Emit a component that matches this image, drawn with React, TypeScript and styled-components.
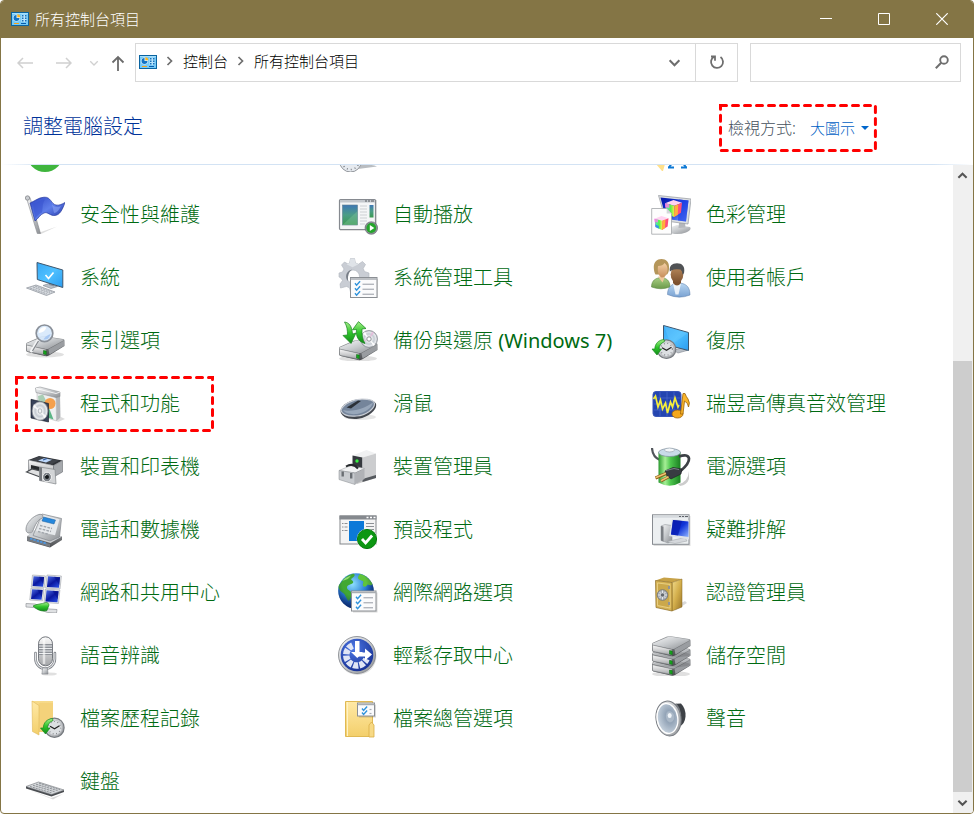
import React from "react";
import styled, { createGlobalStyle } from "styled-components";

const uiFont = `"Noto Sans", "Noto Sans CJK TC", sans-serif`;

const GlobalStyle = createGlobalStyle`
  *, *::before, *::after { box-sizing: border-box; }
  html, body, #root { height: 100%; margin: 0; }
  body { background: #fff; font-family: ${uiFont}; font-weight: 300; }
  button, input, select { font: inherit; }
`;

const Window = styled.div`
  display: flex;
  flex-direction: column;
  height: 100vh;
  overflow: hidden;
  background: #fff;
  border: 1px solid #847545;
  border-radius: 4px;
`;

/* ---------- title bar ---------- */

const TitleBar = styled.header`
  display: flex;
  align-items: center;
  flex: none;
  height: 37px;
  padding: 0 2px 2px 10px;
  background: #847545;
  color: #fff;
`;

const Title = styled.h1`
  flex: 1;
  margin: 0;
  padding-left: 6px;
  font-size: 15px;
  line-height: 20px;
  font-weight: 300;
`;

const CaptionButton = styled.button`
  display: grid;
  place-items: center;
  width: 58px;
  height: 100%;
  padding: 0;
  border: 0;
  background: transparent;
  color: #fff;
`;

/* ---------- navigation row ---------- */

const NavRow = styled.div`
  display: flex;
  align-items: center;
  flex: none;
  height: 48px;
  padding: 0 12px 0 9px;
`;

const NavButton = styled.button<{ $w: number; $active?: boolean }>`
  display: grid;
  place-items: center;
  width: ${(p) => p.$w}px;
  height: 38px;
  padding: 2px 0 0;
  border: 0;
  background: transparent;
  color: ${(p) => (p.$active ? "#6b6b6b" : "#d0d0d0")};
`;

const AddressBar = styled.nav`
  display: flex;
  align-items: center;
  flex: 1;
  min-width: 0;
  height: 39px;
  margin-right: 12px;
  padding-left: 3px;
  border: 1px solid #d9d9d9;
`;

const Crumbs = styled.ol`
  display: flex;
  align-items: center;
  flex: 1;
  min-width: 0;
  margin: 0;
  padding: 0 0 2px;
  list-style: none;
  font-size: 15px;
  line-height: 20px;
`;

const Crumb = styled.li`
  display: flex;
  align-items: center;
  white-space: nowrap;
`;

const CrumbArrow = styled.svg`
  margin: 0 10px 0 9px;
`;

const CrumbLink = styled.a`
  color: #000;
  text-decoration: none;
`;

const BarButton = styled.button<{ $divided?: boolean }>`
  display: grid;
  place-items: center;
  width: 42px;
  height: 37px;
  padding: 0;
  border: 0;
  border-left: ${(p) => (p.$divided ? "1px solid #d9d9d9" : "0")};
  background: transparent;
  color: #6e6e6e;
`;

const SearchBox = styled.form`
  display: flex;
  align-items: center;
  width: 211px;
  height: 39px;
  border: 1px solid #d9d9d9;
`;

const SearchInput = styled.input`
  flex: 1;
  min-width: 0;
  height: 100%;
  padding: 0 8px;
  border: 0;
  outline: 0;
  background: transparent;
  font-size: 15px;
`;

const SearchButton = styled.button`
  display: grid;
  place-items: center;
  width: 36px;
  height: 100%;
  padding: 0;
  border: 0;
  background: transparent;
  color: #6e6e6e;
`;

/* ---------- heading row ---------- */

const HeadingRow = styled.div`
  display: flex;
  align-items: center;
  justify-content: space-between;
  flex: none;
  height: 78px;
  padding: 3px 96px 0 22px;
`;

const Heading = styled.h2`
  margin: 0;
  color: #003399;
  font-size: 20px;
  line-height: 28px;
  font-weight: 300;
`;

const ViewBy = styled.div`
  position: relative;
  display: flex;
  align-items: center;
  height: 48px;
  margin-top: 2px;
  padding: 0 8px 0 9px;
`;

const ViewLabel = styled.label`
  margin-right: 14px;
  color: #454f5c;
  font-size: 16px;
  line-height: 24px;
`;

const ViewSelect = styled.select`
  appearance: none;
  padding: 0;
  border: 0;
  outline: 0;
  background: transparent;
  color: #0060c4;
  font-size: 15px;
  line-height: 24px;
`;

const Caret = styled.svg`
  margin-left: 5px;
`;

const Rule = styled.div`
  flex: none;
  height: 1px;
  background: linear-gradient(90deg, #fff 0, #d3e3f4 40px, #d3e3f4 calc(100% - 40px), #fff 100%);
`;

/* ---------- items ---------- */

const Body = styled.div`
  display: flex;
  flex: 1;
  min-height: 0;
`;

const Viewport = styled.main`
  display: flex;
  flex: 1;
  flex-direction: column;
  justify-content: flex-end;
  min-width: 0;
  overflow: hidden;
`;

const Items = styled.ul`
  display: grid;
  grid-template-columns: repeat(3, minmax(0, 1fr));
  grid-auto-rows: 63px;
  flex: none;
  margin: 0 -1px 0 0;
  padding: 0 0 0 14px;
  list-style: none;
`;

const Item = styled.li`
  display: flex;
  align-items: center;
`;

const ItemLink = styled.a`
  position: relative;
  display: flex;
  align-items: center;
  height: 56px;
  padding: 0 34px 0 10px;
  color: #006a12;
  font-size: 20px;
  line-height: 28px;
  white-space: nowrap;
  text-decoration: none;
`;

const ItemName = styled.span`
  margin-left: 15px;
`;

const Latin = styled.span`
  font-weight: 400;
`;

const Art = styled.svg`
  display: block;
  flex: none;
  width: 40px;
  height: 40px;
`;

const PeekArt = styled(Art)`
  margin-left: 10px;
`;

const Marker = styled.svg`
  position: absolute;
  inset: 0;
  width: 100%;
  height: 100%;
  pointer-events: none;

  rect {
    width: calc(100% - 3px);
    height: calc(100% - 3px);
  }
`;

const Defs = styled.svg`
  position: absolute;
  width: 0;
  height: 0;
`;

/* ---------- scroll bar ---------- */

const ScrollBar = styled.div`
  display: grid;
  grid-template-rows: 21px 175fr 430fr 21px;
  flex: none;
  width: 20px;
  padding-right: 1px;
  background: #f0f0f0;
`;

const ScrollButton = styled.button<{ $row: number }>`
  display: grid;
  grid-row: ${(p) => p.$row};
  place-items: center;
  padding: 0;
  border: 0;
  background: transparent;
  color: #555;
`;

const Thumb = styled.div`
  grid-row: 3;
  background: #cdcdcd;
`;

/* ---------- shared drawings ---------- */

function Dashes() {
  return (
    <Marker aria-hidden="true">
      <rect x="1.5" y="1.5" fill="none" stroke="#ff0000" strokeWidth="3" strokeLinecap="round" strokeDasharray="6 6" />
    </Marker>
  );
}

function Chevron({ dir, size = 12, width = 2 }: { dir: "up" | "down"; size?: number; width?: number }) {
  const d = { up: "M1.5 8.5 6 4l4.5 4.5", down: "M1.5 4 6 8.5 10.5 4" }[dir];
  return (
    <svg width={size} height={size} viewBox="0 0 12 12" aria-hidden="true">
      <path d={d} fill="none" stroke="currentColor" strokeWidth={width} />
    </svg>
  );
}

function PanelIcon() {
  return (
    <svg width="18" height="14" viewBox="0 0 18 14" aria-hidden="true">
      <rect x=".5" y=".5" width="17" height="13" fill="#74caf8" stroke="#0a64a0" />
      <rect x="1" y="1" width="16" height="1" fill="#a4defc" />
      <circle cx="5.5" cy="6" r="3.6" fill="#dff2fd" />
      <path d="M5.5 6V3a3 3 0 1 0 3 3z" fill="#1273c4" />
      <path d="M6.3 5.2V2.2a3 3 0 0 1 3 3z" fill="#ffb51b" />
      <path d="M10.500 2.500h5v7.500h-5z" fill="#b9e3fb" />
      <path d="M11 3h1.500v1.500H11zM14 3h1.500v1.500H14zM11 5.500h1.500V7H11zM14 5.500h1.500V7H14zM11 8h1.500v1.500H11zM14 8h1.500v1.500H14z" fill="#1671ba" />
      <path d="M3 11.500h5" stroke="#f5a21b" />
      <path d="M10 11.500h5" stroke="#0a5cab" />
    </svg>
  );
}

function Gradients() {
  const lin = (id: string, a: string, b: string, c?: string, diag = false) => (
    <linearGradient id={id} x1="0" y1="0" x2={diag ? "1" : "0"} y2="1">
      <stop offset="0" stopColor={a} />
      {c && <stop offset=".5" stopColor={b} />}
      <stop offset="1" stopColor={c || b} />
    </linearGradient>
  );
  return (
    <Defs aria-hidden="true">
      <defs>
        {lin("silver", "#fafafa", "#a3a5a8")}
        {lin("silverD", "#f6f7f8", "#c6c9cc", "#8b8e92", true)}
        {lin("dark", "#9a9da0", "#4b4d50")}
        {lin("sky", "#37a8f5", "#4fc0ff", "#2b9cf0", true)}
        {lin("navy", "#0718a8", "#1034d8", "#8fb4ff", true)}
        {lin("screen", "#4a68e0", "#0a18a0", "#2a50e4", true)}
        {lin("flag", "#2c45c4", "#5f7eea", "#1c2f9e", true)}
        {lin("folder", "#ffe9a6", "#f3cf6b")}
        {lin("folderD", "#f8dc8c", "#dba94a")}
        {lin("leaf", "#a6f08a", "#2fc42b", "#138a1a")}
        {lin("gold", "#f2dc8d", "#d3ae4b", "#98742a", true)}
        {lin("pic", "#3f78b5", "#4c9d86", "#3c9a50")}
        <linearGradient id="cell">
          <stop offset="0" stopColor="#2a9a2f" />
          <stop offset=".3" stopColor="#a6ef96" />
          <stop offset=".55" stopColor="#4cc64c" />
          <stop offset="1" stopColor="#1b7f22" />
        </linearGradient>
        <linearGradient id="rainbow">
          <stop offset="0" stopColor="#f25fe6" />
          <stop offset=".25" stopColor="#4ff0a0" />
          <stop offset=".6" stopColor="#5cf04a" />
          <stop offset="1" stopColor="#fff04a" />
        </linearGradient>
        <radialGradient id="globe" cx=".4" cy=".3" r=".75">
          <stop offset="0" stopColor="#8fe0ff" />
          <stop offset=".5" stopColor="#2b7fd6" />
          <stop offset="1" stopColor="#0a2a7c" />
        </radialGradient>
        <radialGradient id="shade" cx=".45" cy=".3" r=".75">
          <stop offset=".45" stopColor="#04184f" stopOpacity="0" />
          <stop offset="1" stopColor="#04184f" stopOpacity=".65" />
        </radialGradient>
        <radialGradient id="disc" cx=".5" cy=".5" r=".5">
          <stop offset=".2" stopColor="#fff" />
          <stop offset=".6" stopColor="#c6ccd3" />
          <stop offset=".85" stopColor="#e9ebee" />
          <stop offset="1" stopColor="#9fa4aa" />
        </radialGradient>
        <radialGradient id="blue" cx=".4" cy=".3" r=".8">
          <stop offset="0" stopColor="#4d78e6" />
          <stop offset="1" stopColor="#122a8c" />
        </radialGradient>
        <radialGradient id="cone" cx=".62" cy=".45" r=".7">
          <stop offset="0" stopColor="#eef2f6" />
          <stop offset=".3" stopColor="#93a4b7" />
          <stop offset="1" stopColor="#d2dce6" />
        </radialGradient>
        {lin("skin", "#f3cfa4", "#c78f5c")}
        {lin("skinB", "#b98a5c", "#7d5230")}
        {lin("shirtG", "#a9cf84", "#6b9a4a")}
        {lin("shirtB", "#b9d7f2", "#7aa2d2")}
      </defs>
    </Defs>
  );
}

function CheckSheet({ x, y, w, h, rows }: { x: number; y: number; w: number; h: number; rows: number }) {
  const step = (h - 5) / rows;
  return (
    <g>
      <rect x={x + 1.5} y={y + 1.5} width={w} height={h} fill="#000" opacity=".15" />
      <rect x={x} y={y} width={w} height={h} fill="#fbfbfc" stroke="#8b8f94" />
      <path d={`M${x} ${y + 1.5}h${w}`} stroke="#a9adb2" strokeWidth="1.5" />
      {Array.from({ length: rows }, (_, i) => {
        const cy = y + 5 + i * step + step / 4;
        return (
          <g key={i} fill="none">
            <path d={`M${x + 4.5} ${cy - 0.5}l1.6 2 3.5-4`} stroke="#2f93dc" strokeWidth="1.4" />
            <path d={`M${x + 12} ${cy + 0.5}h${w - 15}`} stroke="#a7abb3" strokeWidth="1.2" />
          </g>
        );
      })}
    </g>
  );
}

function Drive({ y }: { y: number }) {
  return (
    <g transform={`translate(0 ${y})`}>
      <ellipse cx="20" cy="18.5" rx="19" ry="3" fill="#000" opacity=".12" />
      <path d="M1 8 Q1 7 3 6.2L16 .6Q18 0 20 .2L38 3q1.5.4 1.500 1.500v5.500L24 19.500q-2 1-4 .5L2.500 16Q1 15.500 1 14z" fill="url(#dark)" />
      <path d="M1.500 7.500 17 1q1-.5 3-.2l18 2.700q1 .5 0 1L24 12.500q-1.500.8-3.500.4L2 9Q1 8.500 1.500 7.500z" fill="url(#silverD)" />
      <path d="M1.500 9 21 13.400v5.800L2.500 15.500q-1-.4-1-1.500z" fill="url(#silver)" stroke="#808387" strokeWidth=".6" />
      <path d="M23.500 13.300 39 4.700v5L24.500 18.500z" fill="#9a9da1" />
      <path d="M18.500 14.500l2.800.6v3.600l-2.800-.7z" fill="#15a51c" stroke="#0a5e10" strokeWidth=".5" />
    </g>
  );
}

function Clock({ x, y, r }: { x: number; y: number; r: number }) {
  return (
    <g transform={`translate(${x} ${y})`}>
      <circle r={r} fill="url(#silverD)" stroke="#777b80" strokeWidth="1.2" />
      <circle r={r - 2} fill="#dcdfe2" stroke="#b3b6ba" strokeWidth=".6" />
      <circle r={r - 3.4} fill="none" stroke="#7b7e82" strokeWidth="1.2" strokeDasharray=".8 2.7" />
      <path d="M-4.500-1.500 0 1l5-3" fill="none" stroke="#222" strokeWidth="1.2" />
    </g>
  );
}

function Backward({ x, y }: { x: number; y: number }) {
  return (
    <path
      transform={`translate(${x} ${y})`}
      d="M0 9.500 5 15.500 9.500 9.500H7C7 6 9 3.500 12.500 2L12 0C6.500.5 3 4 2.800 9.500z"
      fill="url(#leaf)"
      stroke="#168a1c"
      strokeWidth=".7"
    />
  );
}

function Cube({ x, y, s }: { x: number; y: number; s: number }) {
  return (
    <g transform={`translate(${x} ${y}) scale(${s / 16})`}>
      <path d="M0 3 8 0l8 2.500-7 3z" fill="#ffd3f0" />
      <path d="M0 3 9 5.500 8.500 16 1 12.500z" fill="url(#rainbow)" />
      <path d="M9 5.500 16 2.500 15 12 8.500 16z" fill="#ff4f7a" />
      <path d="M9 5.500l3.500-1.500-.5 9.800-3.500 2.200z" fill="#ffb03a" />
      <path d="M.8 9.500 5 11.500v3L1 12.500z" fill="#2f7dff" opacity=".8" />
      <path d="M0 3l4 1.100L4 7.500.3 6.500z" fill="#ff7fe6" opacity=".8" />
    </g>
  );
}

function MiniScreen({ x, y, w, h }: { x: number; y: number; w: number; h: number }) {
  return (
    <g transform={`translate(${x} ${y}) skewX(-6) skewY(4)`}>
      <rect width={w} height={h} fill="#e3e6ea" stroke="#a4a8ae" strokeWidth=".6" />
      <rect x="1.2" y="1.2" width={w - 2.4} height={h - 2.4} fill="url(#screen)" />
      <path d={`M${w - 1.2} 1.200v${h * 0.6}L${w * 0.5} 1.200z`} fill="#06128c" opacity=".6" />
    </g>
  );
}

const art: Record<string, React.ReactNode> = {
  flag: (
    <>
      <path d="M13 38 32 31.500 16 39z" fill="#000" opacity=".13" />
      <path d="M1.500 3 12.300 38.500h3.200L5 2.500z" fill="url(#silverD)" stroke="#84878b" strokeWidth=".6" />
      <circle cx="2.500" cy="3" r="2.200" fill="#c9ccd0" stroke="#7b7e82" strokeWidth=".7" />
      <path d="M5 8C10 6 13 2.600 19 2.200 26 1.600 26 9 31 10c3 .6 6-.8 9-2.500-2.500 7-5 12.500-10 13-5 .6-7-4-11-2.500-4 1.500-6 6-9 8z" fill="url(#flag)" stroke="#1b2e96" strokeWidth=".6" />
      <path d="M8 8.500C14 7 16 4 20 4.500c-3 4-2 9-3 13-3 1-5 4-7 6z" fill="#3a55d0" opacity=".6" />
      <path d="M27 9.500c3 3 6 3 9 1.500-2 4-4 7-7 7z" fill="#88a2f5" opacity=".6" />
    </>
  ),
  system: (
    <>
      <path d="M18 27.500 24 25.500 32.500 28.500 26 30.500z" fill="#b9c0c8" stroke="#7d858f" strokeWidth=".6" />
      <path d="M24 23.500l5 1.500v3.500l-5-1.500z" fill="#8c949e" />
      <path d="M12 4.500 37.800 12v17.500L12.300 21.500z" fill="url(#sky)" stroke="#3f566d" />
      <path d="M20.500 17l3 3.500 5-6" fill="none" stroke="#fff" strokeWidth="1.600" />
      <path d="M1.500 30 11 27l19 7-8.500 3.500z" fill="#d7dbe0" stroke="#878d95" strokeWidth=".7" />
      <path d="M5 30l17 6M8 29l17 6M10 28l17 6" stroke="#a3a8af" strokeWidth="1" strokeDasharray="2 .8" />
    </>
  ),
  indexing: (
    <>
      <Drive y={15} />
      <path d="M13 19.500 6.500 30" stroke="#f4f5f6" strokeWidth="3" strokeLinecap="round" />
      <path d="M13.500 20 7.500 30" stroke="#83878c" strokeWidth="1.300" />
      <circle cx="19.500" cy="12.300" r="8.300" fill="#d5e7fb" fillOpacity=".88" stroke="#8a9099" strokeWidth="1.700" />
      <path d="M13.500 12a6 6 0 0 1 8-5.500q-2 5-8 5.500z" fill="#fff" />
      <path d="M25.500 13a6 6 0 0 1-7 5.500q2-4 7-5.500z" fill="#a9c9f3" />
    </>
  ),
  programs: (
    <>
      <path d="M31 36.500 36 33l4 2-7 3z" fill="#000" opacity=".14" />
      <path d="M12 7l19 4 .5 26-19-6z" fill="#eeeff0" stroke="#b5b8bb" strokeWidth=".6" />
      <path d="M31 11l4-1 .5 23.500-4 3.500z" fill="#b3b6b9" />
      <path d="M10.500 4 15 3l20 5v4.500l-4 1-20-5z" fill="url(#silverD)" stroke="#8f9295" strokeWidth=".6" />
      <path d="M11 4.500 31 9.500l4-1.500" fill="none" stroke="#fff" strokeWidth=".8" />
      <path d="M13 12 18 10.500l4 8-8 3z" fill="#a9cdb4" />
      <circle cx="25" cy="19.500" r="5.500" fill="#f5a04c" />
      <path d="M24 24l4.500 11.500-6-2z" fill="#5bb585" />
      <path d="M6 15.300 23.500 19.500V38L6 34z" fill="#39435a" stroke="#0f1522" strokeWidth=".6" />
      <ellipse cx="15" cy="27" rx="8" ry="9.400" fill="url(#disc)" stroke="#8e9399" strokeWidth=".5" />
      <path d="M15 27 8 23l1-3zM15 27l6.500 5-2 2.500z" fill="#fff" opacity=".8" />
      <ellipse cx="15" cy="27" rx="1.800" ry="2.300" fill="#f4f5f6" stroke="#9aa0a6" strokeWidth=".7" />
    </>
  ),
  printers: (
    <>
      <path d="M3.500 13 14 9l23.500 4.500-9 5z" fill="#303338" />
      <path d="M3.500 13 28.500 18.500V28l-25-4z" fill="url(#silver)" stroke="#6c6f74" strokeWidth=".6" />
      <path d="M28.500 18.500l9-5v11.500l-9 5z" fill="#a6a9ad" stroke="#6c6f74" strokeWidth=".6" />
      <path d="M5 13 14 9.800l20 3.700-7 3.500z" fill="#40444a" />
      <path d="M13 13.500l6-2.300 8 1.500-6 2.800z" fill="#bdd8fb" />
      <path d="M18 13l4-1.500" stroke="#315a9d" strokeWidth="1.200" />
      <path d="M6 18l9 2v4l-9-2z" fill="#27292c" />
      <path d="M1.500 25 7 22l12 3-2.500 5.500z" fill="#dfe0e1" stroke="#4b4e52" strokeWidth="1.200" />
      <path d="M14.500 20 30 22.500 31 37 14.500 33.500z" fill="#d2d4d6" stroke="#83868a" strokeWidth=".7" />
      <path d="M14.500 20v13.500l2.500.5V20.500z" fill="#75787d" />
      <ellipse cx="22" cy="30" rx="4.400" ry="4.800" fill="#7b8086" stroke="#f5f5f5" />
      <circle cx="22" cy="30" r="2" fill="#15181c" />
      <path d="M20.500 28.500l1-1" stroke="#fff" />
    </>
  ),
  phone: (
    <>
      <path d="M2 26.500 12 19l25 7.500v3.500L25 37.500 2 31z" fill="url(#dark)" />
      <path d="M2 26 12 19l25 7.500L25.500 33z" fill="#cdd0d4" />
      <path d="M2 27.500l23 6.500v3L2 30.500z" fill="#777b81" />
      <path d="M5 28.500l17 5.200" stroke="#4d96e0" strokeWidth="1.800" strokeDasharray="2.500 1" />
      <path d="M17 4 36.500 8.500 34.500 27 25 31 8 25.500z" fill="url(#silverD)" stroke="#83878c" strokeWidth=".7" />
      <path d="M19 5.500l15.500 3.800-4.500 16L11 21z" fill="#e6e9ec" />
      <path d="M18.500 7l12 3-1.500 4-12-3z" fill="#2587dc" stroke="#1a5d9c" strokeWidth=".5" />
      <path d="M15 15.500l12 3M14 18.500l12 3M13 21.500l11 3" stroke="#a1a6ac" strokeWidth="1.400" strokeDasharray="2.600 1.200" />
      <path d="M1 19C1 13 8 6 14 4.500c3-.7 4.500 1 3.500 3-1 1.700-3 1.500-4 3-2 2-4 6-5 9-.5 2.500-3 4-5 3.500C1.500 22.500 1 21 1 19z" fill="url(#silverD)" stroke="#797d82" strokeWidth=".7" />
    </>
  ),
  network: (
    <>
      <MiniScreen x={7.5} y={2} w={13} h={12} />
      <MiniScreen x={22} y={2} w={14.5} h={13} />
      <MiniScreen x={6} y={15} w={13} h={12} />
      <MiniScreen x={20.5} y={16} w={14.5} h={13.5} />
      <path d="M1 30.500 10 31l14 5 8 .500-.500 3.500-9-.500L9 34.500 1 34z" fill="#dfe1e3" stroke="#94979b" strokeWidth=".7" />
      <path d="M8 33c3-2 9-2 13-3.500 1.500 0 3 1 3 2.500l-2 5.500c-5 1.500-10-.5-14-4.500z" fill="url(#leaf)" stroke="#0e7b16" strokeWidth=".6" />
    </>
  ),
  mic: (
    <>
      <ellipse cx="24" cy="38" rx="8" ry="1.600" fill="#000" opacity=".12" />
      <path d="M10.500 17v6a9.700 9.700 0 0 0 19.400 0v-6" fill="none" stroke="#787c82" strokeWidth="2.600" strokeLinecap="round" />
      <path d="M10.500 17v6a9.700 9.700 0 0 0 19.400 0v-6" fill="none" stroke="#e0e2e5" strokeWidth="1.200" strokeLinecap="round" />
      <path d="M17.500 32h5l.5 6h-6z" fill="url(#silverD)" stroke="#81858a" strokeWidth=".6" />
      <rect x="13.500" y=".8" width="14" height="29" rx="7" fill="url(#silver)" stroke="#72767c" />
      <path d="M13.700 8h13.600v11H13.700z" fill="#8e9298" />
      <path d="M14 10h13M14 12.500h13M14 15h13M14 17.500h13" stroke="#eceef0" strokeWidth="1.100" />
      <path d="M19 2v26" stroke="#fff" strokeWidth="2.500" opacity=".6" />
    </>
  ),
  history: (
    <>
      <path d="M7 2h21v31H13z" fill="url(#folderD)" />
      <path d="M14 4h14v29H14z" fill="#f4d27a" />
      <path d="M7 2l7 4.500V36l-6.500-3.500z" fill="url(#folder)" stroke="#dfb85a" strokeWidth=".6" />
      <Clock x={29.5} y={28.7} r={9.6} />
      <Backward x={15.5} y={19.5} />
    </>
  ),
  keyboard: (
    <>
      <path d="M2 27 26 36l12-4-10 5.500z" fill="#000" opacity=".15" />
      <path d="M1 24.500 26.500 32l12.500-4v2L26.500 34.500 1 26.500z" fill="#4a4d51" />
      <path d="M1 24.500 13.500 20 39 28l-12.500 4.500z" fill="#d5d8db" stroke="#6e7277" strokeWidth=".6" />
      <path d="M5 24.500l22 6.500M8 23.300l22 6.500M11 22.200l22 6.500M14 21.200l21 6.500" stroke="#8f9398" strokeWidth="1" strokeDasharray="2.200 .7" />
    </>
  ),
  autoplay: (
    <>
      <rect x="2" y="5" width="37" height="31" fill="#000" opacity=".12" />
      <rect x="1.500" y="4.500" width="36" height="30" rx="1" fill="#f5f6f7" stroke="#868a90" strokeWidth="1.200" />
      <path d="M2 5h35v2.500H2z" fill="#c4c8cd" />
      <path d="M27 6h2m1 0h2m1 0h3" stroke="#565a60" />
      <rect x="4.500" y="10" width="15" height="20" fill="url(#pic)" stroke="#5e7f8e" strokeWidth=".6" />
      <path d="M4.500 30 19.500 16v14z" fill="#7fc59a" opacity=".4" />
      <path d="M22 11h7M22 14h7M22 17h7M22 20h7M22 23h7M22 26h7M22 29h5" stroke="#cdd0d4" strokeWidth="1.200" />
      <rect x="31.500" y="10" width="4" height="12.500" fill="url(#pic)" />
      <circle cx="33.300" cy="33" r="6.300" fill="#8b9095" stroke="#5f646a" strokeWidth=".6" />
      <circle cx="33.300" cy="33" r="4.900" fill="#24a52b" />
      <path d="M31.800 30v6l4.500-3z" fill="#fff" />
    </>
  ),
  tools: (
    <>
      <path
        fillRule="evenodd"
        d="M12.500.5h4l1 4.500 3 1.200 4-2.700 3 3-2.300 4 1.300 3L31 15v5l-4.500 1-1.500 3 2.500 4-3 3-4-2.500-3 1.300-1 4.200h-4l-1-4.200-3-1.300L2.500 30l-.5-4 2.500-3.500L3 20l-2-1v-4l3.500-1L6 11 3.500 7l3-3L10 6l1.500-1zM15 12a6.500 6.500 0 1 0 0 13 6.500 6.500 0 0 0 0-13z"
        fill="#c9cdd4"
        stroke="#b0b5bd"
        strokeWidth=".6"
      />
      <path d="M12.500.5h4l1 4.500 3 1.200-6 3-6-3 3-1.200z" fill="#dfe3e8" />
      <path d="M10 23a7 7 0 0 1-1-8q1.500-3 5-3.500-5 4-4 11.500z" fill="#787e87" />
      <CheckSheet x={12.5} y={19.5} w={26.5} h={20} rows={3} />
    </>
  ),
  backup: (
    <>
      <Drive y={19} />
      <circle cx="31" cy="18" r="8.500" fill="url(#disc)" stroke="#92979d" strokeWidth=".8" />
      <path d="M31 18 25 12.500l2-1.500zM31 18l6 5.500-1.500 1.500z" fill="#fff" />
      <path d="M31 18l-7.500 1.500.5 2.500zM31 18l3-7.500 2 1.500z" fill="#e6b6d8" opacity=".8" />
      <circle cx="31" cy="18" r="2.200" fill="#fff" stroke="#8d9298" />
      <path d="M6.500 1C11 1.500 14 5 14.500 13l3.500-1-5 10.500L5 14.500l4.500-.6C9.500 9 9 5 6.500 1z" fill="url(#leaf)" stroke="#16821c" strokeWidth=".7" />
      <path d="M27 22.500C21 21 17.500 16 18.500 8.500l-4 .3L20.500.6 28 7.500l-4 .5c-.3 6 .5 10.500 3 14.500z" fill="url(#leaf)" stroke="#16821c" strokeWidth=".7" />
    </>
  ),
  mouse: (
    <>
      <ellipse cx="22" cy="33" rx="16" ry="3" fill="#000" opacity=".1" />
      <path d="M2.500 27C3 20 14 15 24 15c8 0 14 2 14.200 6 .2 5-7 12-18 13.800C10 36 2.500 32 2.500 27z" fill="#43474e" />
      <path d="M3 26C5 20 15 15.200 24 15.200c8 0 12.500 2 12.500 4.600 0 5-8 11.200-18 12.200C9 33 3.500 30 3 26z" fill="#75859b" stroke="#c9ced6" strokeWidth="1.200" />
      <path d="M18 26c5-1 11-3.500 17-7.500-1 5-7 10-16 11.500-7 .7-12-1-14-4 3 1 8 1 13 0z" fill="#98a7ba" />
      <path d="M8.500 23.500 20 16.500l3 .5-10 7.500z" fill="#2b3037" />
    </>
  ),
  devices: (
    <>
      <path d="M17 33l21-5v3l-19 6z" fill="#000" opacity=".2" />
      <path d="M14.500 8.500 28.500 3 38 6.500 24.500 10.500z" fill="#f0f1f2" />
      <path d="M14.500 8.500 24.500 10.500V32l-10-5z" fill="#35393e" />
      <path d="M24.500 10.500 38 6.500v23L24.500 34z" fill="#cccdcf" />
      <path d="M24.500 32 38 28v3L24.500 35z" fill="#55595e" />
      <circle cx="19" cy="14" r="1.700" fill="#35f040" />
      <path d="M1 23.500 13 18.500 26.500 21.500 17 26z" fill="#f1f2f3" stroke="#9a9da1" strokeWidth=".5" />
      <path d="M8 19.500q7-4 12 2" fill="none" stroke="#26292d" strokeWidth="2" />
      <path d="M1 23.500 17 26v11.500L1 32.500z" fill="#c9ccd0" stroke="#85888c" strokeWidth=".5" />
      <path d="M17 26l9.500-4.500v10.500L17 37.500z" fill="#b0b2b6" />
      <path d="M3.500 24.500h2.400v5H3.500zM12 26h2.400v5.500H12z" fill="#6a6e73" />
    </>
  ),
  defaults: (
    <>
      <rect x="2" y="6" width="36" height="28" fill="#f4f4f4" stroke="#84888c" />
      <path d="M1.500 5.500h37v4h-37z" fill="#85898e" />
      <path d="M28.500 7.500h2m1.500 0h2m1.500 0h2" stroke="#fff" strokeWidth="1.500" />
      <path d="M4 13.500h1.500m1 0h3M4 17h1.500m1 0h3M4 20.500h1.500m1 0h3" stroke="#8d9196" strokeWidth="1.200" />
      <path d="M28 13.500h8M28 16.500h8M28 19.500h8" stroke="#8d9196" />
      <rect x="11" y="11" width="15" height="20" fill="#0c79d8" />
      <circle cx="29" cy="29" r="10.300" fill="#fff" />
      <circle cx="29" cy="29" r="9.600" fill="#0c9712" stroke="#067a0c" />
      <path d="M24 29l3.600 4 6.500-7.500" fill="none" stroke="#fff" strokeWidth="2.800" />
    </>
  ),
  internet: (
    <>
      <circle cx="18" cy="18" r="17.800" fill="url(#globe)" />
      <path d="M3 9.500C7 4 11 1.500 16 .8c2 2-1 3.700-3 5.200 1 2 3 2 2 4-2 2-5 1-6 4-.5 3 3 3 5 6 1 3-2 5-3 8-3-2-3-6-6-8-3-2-4.500-4-4.500-6.500C.7 12 2 11 3 9.500z" fill="#41a834" />
      <path d="M22 1c5 1 10 5 12.500 10-1 2-3 1-5 .5-1 2-3 3-4.500 1.500-1-2 1-3 0-5-2-1-5-1-5-3.500C20.500 2.500 21 2 22 1z" fill="#5fc43a" />
      <path d="M4 8q4-4 9-5.500-2 4-9 5.500z" fill="#b8f08c" opacity=".7" />
      <circle cx="18" cy="18" r="17.800" fill="url(#shade)" />
      <CheckSheet x={13.5} y={18} w={24.5} h={20} rows={3} />
    </>
  ),
  ease: (
    <>
      <circle cx="19.500" cy="20" r="19" fill="#000" opacity=".12" />
      <circle cx="19" cy="19" r="18.500" fill="url(#silverD)" stroke="#7c8086" strokeWidth=".8" />
      <circle cx="19" cy="19" r="16.300" fill="url(#blue)" />
      <path d="M14.500 9.500A10.500 10.500 0 1 0 28.500 23" fill="none" stroke="#dfe5f5" strokeWidth="6.500" strokeDasharray="5 1.200" />
      <path d="M17 5h4.500v11h3.500L19.300 22 13 16h4z" fill="#fff" />
      <path d="M20 16.500h7v-4l7 6-7 6v-4h-7z" fill="#fff" />
    </>
  ),
  folder: (
    <>
      <path d="M7.500 2.500h27v35h-27z" fill="url(#folder)" stroke="#e0b953" />
      <path d="M9.500 3v34" stroke="#fff2c4" />
      <path d="M31 38V26l2.500-3 2.500 3v12z" fill="#f7d985" stroke="#d9ad45" strokeWidth=".8" />
      <CheckSheet x={19.5} y={4} w={17} h={13} rows={2} />
    </>
  ),
  color: (
    <>
      <path d="M17 33l9-3 13 2q2 3-4 5.500-7 2.500-14 1z" fill="url(#silverD)" />
      <path d="M28 28l6-.5.500 5-7 .500z" fill="#b5b8bc" />
      <path d="M7.500.5 40 4 37 29 15 26z" fill="#dcdfe2" stroke="#94989d" strokeWidth=".7" />
      <path d="M9.500 2.500 37.500 5.500 35 26.500 15 24z" fill="url(#navy)" />
      <path d="M28 4.500l9.500 1L35 26.500l-8-1z" fill="#2346e8" opacity=".7" />
      <Cube x={14} y={5} s={17} />
      <path d="M.7 13.500h15l4.800 5v20.700H.7z" fill="#fdfdfd" stroke="#a1a4a8" strokeWidth=".8" />
      <path d="M15.700 13.500v5h4.800z" fill="#d3d6da" />
      <Cube x={3.5} y={21} s={14} />
    </>
  ),
  users: (
    <>
      <path d="M.5 29C.5 22 5 20 10 19.500 15 20 19 22 19 29q-9 3.500-18.500 0z" fill="url(#shirtG)" stroke="#4b7a30" strokeWidth=".5" />
      <path d="M7 18.500h7l-2.500 6z" fill="#efc79a" />
      <path d="M2.800 10C2.500 4 6 1 10.500 1s8 3 7.500 9c0 3-.5 5-2 6.500H4.500C3.500 15 3 13 2.800 10z" fill="#b5965a" />
      <path d="M7 8q5 0 6.500-3 3 2 3 6c0 5-2.500 8.500-5.500 8.500-2.500 0-5-5-4-11.500z" fill="url(#skin)" />
      <path d="M16.500 36.500c0-7 4-11 10.500-11.500 7 0 12 3 12 12q-11 4.500-22.500-.5z" fill="url(#shirtB)" stroke="#5277a6" strokeWidth=".5" />
      <path d="M22 25.500h8l-2.500 11h-3z" fill="#fff" opacity=".8" />
      <path d="M22 20h8v5q-4 5-8 0z" fill="#7d5230" />
      <ellipse cx="26" cy="16.500" rx="6.300" ry="8" fill="url(#skinB)" />
      <path d="M18.800 13.500C18 8 21 5.300 26 5.300s8.500 3 7 10l-1.500 1.500q0-4-2-5.300-6-1-9 1z" fill="#505255" />
    </>
  ),
  recovery: (
    <>
      <path d="M22 29l9-2 5 2.500-9 2.500z" fill="#b9bfc6" stroke="#7f868f" strokeWidth=".6" />
      <path d="M12.500 4.500 37.500 11.500v18L12.500 23z" fill="url(#sky)" stroke="#3f566d" />
      <path d="M13 5l24 7L20 24z" fill="#7bd0ff" opacity=".3" />
      <Clock x={15.5} y={28.2} r={9.3} />
      <Backward x={1} y={18.5} />
    </>
  ),
  audio: (
    <>
      <rect x="2" y="7.500" width="28" height="25" rx="3" fill="#2445b0" stroke="#3a57b8" />
      <path d="M3 14h26M3 20h26M3 26h26M9 8v24M16 8v24M23 8v24" stroke="#5370d4" strokeWidth=".6" />
      <path d="M2.500 15l2-3 2.500 11 2.500-7 2 9 3-6 2 10 3-11 2 5 2.500-9 3 9 1-2" fill="none" stroke="#f7ee3a" strokeWidth="1.700" />
      <ellipse cx="26.500" cy="30" rx="5.500" ry="4" fill="#f5a81c" stroke="#9c6208" strokeWidth=".8" />
      <path d="M29.500 30 32 9.500l2 0q1 3 3 5.500 2.500 4 .5 8-.5-4.500-4-6L32 30z" fill="#f9b52c" stroke="#9c6208" strokeWidth=".8" />
    </>
  ),
  power: (
    <>
      <path d="M27 37q10-1 11-13v8q-2 6-9 7z" fill="#000" opacity=".2" />
      <path d="M1 1q.5 9 8 12" fill="none" stroke="#50555b" strokeWidth="2.200" />
      <path d="M7.500 5v30.500q11 6.500 22 0V5z" fill="url(#cell)" />
      <ellipse cx="18.500" cy="5.500" rx="11" ry="4" fill="#c9dbe8" stroke="#7d8d9b" strokeWidth=".7" />
      <ellipse cx="18.500" cy="3" rx="5" ry="2" fill="#f4f7fa" stroke="#8796a3" strokeWidth=".6" />
      <path d="M28 9.500q9-3 10 2 .5 5-9 13" fill="none" stroke="#3d4146" strokeWidth="2.800" />
      <path d="M14 24 22 20.500l9 1.500-1 5-10 5q-5-2-6-8z" fill="#383c42" stroke="#1b1e22" strokeWidth=".6" />
      <path d="M15 23.500l8-2 5 1" fill="none" stroke="#7d838b" />
      <path d="M15 26.500 4.500 31M17.500 30 10 34" stroke="#8a5b15" strokeWidth="3" />
      <path d="M15 26.300 4.500 30.700M17.500 29.800 10 33.800" stroke="#eec172" strokeWidth="1.600" />
    </>
  ),
  trouble: (
    <>
      <rect x="2.500" y="6" width="37" height="30" fill="#000" opacity=".13" />
      <rect x="1.500" y="4.800" width="36.500" height="29.500" fill="#eceff1" stroke="#878b91" />
      <path d="M2 5.300h35.500v2.500H2z" fill="#d6dade" />
      <path d="M28 6.500h2m1 0h2m1 0h3" stroke="#60646a" />
      <path d="M10 16l4-1.500 7 1V31l-4 2-7-2.500z" fill="url(#silverD)" stroke="#8b8f94" strokeWidth=".5" />
      <path d="M10 16l2.500.6V31.500l-2.500-1z" fill="#7b7f84" />
      <path d="M16 31.500l18-4 2 3.500-12 2.500z" fill="#d5d8dc" stroke="#9ca0a5" strokeWidth=".5" />
      <path d="M21 9 38 10.500v19L18 26z" fill="#dfe3e8" />
      <path d="M22 10l15.500 1.500V27L20 24.500z" fill="url(#navy)" />
      <path d="M22 10l9 1-4 14.500-7-1z" fill="#0a1eb0" opacity=".75" />
    </>
  ),
  safe: (
    <>
      <path d="M24 37.500 36 30l-2-2-8 4z" fill="#000" opacity=".15" />
      <path d="M4.500 7.500 13 4.500 31 6l-10 3.500z" fill="#c7a247" />
      <path d="M21 9.500 31 6v28l-10 4z" fill="url(#gold)" stroke="#856420" strokeWidth=".5" />
      <path d="M4.500 7.500l16.500 2V38l-16-3.500z" fill="#d6b354" stroke="#8b6b26" strokeWidth=".7" />
      <path d="M6.500 10l12.500 1.500V35L6.500 32.500z" fill="#cba84b" stroke="#edd58b" strokeWidth=".8" />
      <circle cx="11.500" cy="22" r="5.300" fill="#a9aeb4" stroke="#6d7278" strokeWidth=".8" />
      <path d="M11.500 17.500v9M7 22h9M8.500 19l6 6m0-6-6 6" stroke="#e6e8eb" />
      <circle cx="11.500" cy="22" r="1.700" fill="#63686e" />
      <path d="M18 13v3M18 29v3" stroke="#8f9399" strokeWidth="2" />
    </>
  ),
  storage: (
    <>
      <Drive y={19.5} />
      <Drive y={9.8} />
      <Drive y={0} />
    </>
  ),
  speaker: (
    <>
      <path d="M20 5 30 4.500q5 5 4.500 13Q34 25 28 28l-8 2z" fill="#3d4146" />
      <path d="M25 5q7 8 3 23" fill="none" stroke="#777c82" strokeWidth="1.600" />
      <ellipse cx="17.500" cy="19.500" rx="12.500" ry="17.500" transform="rotate(-8 17.500 19.500)" fill="url(#silverD)" stroke="#777b81" />
      <ellipse cx="16.500" cy="19.500" rx="10.300" ry="15" transform="rotate(-8 16.500 19.500)" fill="url(#cone)" stroke="#fff" strokeWidth="1.300" />
      <ellipse cx="19.500" cy="18" rx="3.800" ry="5" fill="#aab8c7" />
      <ellipse cx="18.700" cy="16.500" rx="2" ry="2.600" fill="#f1f5f9" />
    </>
  ),
  peekGreen: <circle cx="20" cy="22" r="18" fill="#3fb53d" />,
  peekClock: (
    <>
      <path d="M13 34q18-3 26 .5L20 37z" fill="#b9bdc1" />
      <circle cx="12.500" cy="29" r="11" fill="#e6eaef" stroke="#92969b" />
      <circle cx="12.500" cy="29" r="8.500" fill="none" stroke="#777b80" strokeWidth="1.500" strokeDasharray="1 3" />
    </>
  ),
  peekFonts: (
    <>
      <path d="M5 32l6 7h1l2-7z" fill="#ffe08a" />
      <path d="M17 35.500h6M30 35.500h6" stroke="#0c78d4" strokeWidth="2" />
      <path d="M18 35.500l2-3M35 35.500l-2-3" stroke="#0c78d4" strokeWidth="2" />
    </>
  ),
};

const peeks = ["peekGreen", "peekClock", "peekFonts"];

const items: { icon: string; name: string; latin?: string; marked?: boolean }[] = [
  { icon: "flag", name: "安全性與維護" },
  { icon: "autoplay", name: "自動播放" },
  { icon: "color", name: "色彩管理" },
  { icon: "system", name: "系統" },
  { icon: "tools", name: "系統管理工具" },
  { icon: "users", name: "使用者帳戶" },
  { icon: "indexing", name: "索引選項" },
  { icon: "backup", name: "備份與還原", latin: "(Windows 7)" },
  { icon: "recovery", name: "復原" },
  { icon: "programs", name: "程式和功能", marked: true },
  { icon: "mouse", name: "滑鼠" },
  { icon: "audio", name: "瑞昱高傳真音效管理" },
  { icon: "printers", name: "裝置和印表機" },
  { icon: "devices", name: "裝置管理員" },
  { icon: "power", name: "電源選項" },
  { icon: "phone", name: "電話和數據機" },
  { icon: "defaults", name: "預設程式" },
  { icon: "trouble", name: "疑難排解" },
  { icon: "network", name: "網路和共用中心" },
  { icon: "internet", name: "網際網路選項" },
  { icon: "safe", name: "認證管理員" },
  { icon: "mic", name: "語音辨識" },
  { icon: "ease", name: "輕鬆存取中心" },
  { icon: "storage", name: "儲存空間" },
  { icon: "history", name: "檔案歷程記錄" },
  { icon: "folder", name: "檔案總管選項" },
  { icon: "speaker", name: "聲音" },
  { icon: "keyboard", name: "鍵盤" },
];

const path = ["控制台", "所有控制台項目"];

export default function App() {
  return (
    <Window>
      <GlobalStyle />
      <Gradients />
      <TitleBar>
        <PanelIcon />
        <Title>所有控制台項目</Title>
        <CaptionButton aria-label="最小化">
          <svg width="12" height="12" aria-hidden="true">
            <path d="M0 5.500h12" stroke="currentColor" />
          </svg>
        </CaptionButton>
        <CaptionButton aria-label="最大化">
          <svg width="12" height="12" aria-hidden="true">
            <path d="M.5.5h11v11H.5z" fill="none" stroke="currentColor" />
          </svg>
        </CaptionButton>
        <CaptionButton aria-label="關閉">
          <svg width="12" height="12" aria-hidden="true">
            <path d="M.3.3l11.400 11.400M11.700.3.3 11.700" stroke="currentColor" strokeWidth="1.200" />
          </svg>
        </CaptionButton>
      </TitleBar>

      <NavRow>
        <NavButton $w={30} aria-label="上一頁" disabled>
          <svg width="16" height="12" aria-hidden="true">
            <path d="M16 6H1.500M6 1 1 6l5 5" fill="none" stroke="currentColor" strokeWidth="1.500" />
          </svg>
        </NavButton>
        <NavButton $w={48} aria-label="下一頁" disabled>
          <svg width="16" height="12" aria-hidden="true">
            <path d="M0 6h14.500M10 1l5 5-5 5" fill="none" stroke="currentColor" strokeWidth="1.500" />
          </svg>
        </NavButton>
        <NavButton $w={12} aria-label="最近的位置" disabled>
          <Chevron dir="down" size={10} width={1.6} />
        </NavButton>
        <NavButton $w={35} $active aria-label="上移">
          <svg width="14" height="16" aria-hidden="true">
            <path d="M7 16V2M1.500 7.500 7 2l5.500 5.500" fill="none" stroke="currentColor" strokeWidth="1.800" />
          </svg>
        </NavButton>
        <AddressBar aria-label="網址列">
          <PanelIcon />
          <Crumbs>
            {path.map((step) => (
              <Crumb key={step}>
                <CrumbArrow width="7" height="10" viewBox="0 0 7 10" aria-hidden="true">
                  <path d="M1.500 1l4 4-4 4" fill="none" stroke="#6e6e6e" strokeWidth="1.700" />
                </CrumbArrow>
                <CrumbLink href={`#${step}`}>{step}</CrumbLink>
              </Crumb>
            ))}
          </Crumbs>
          <BarButton aria-label="先前的位置">
            <Chevron dir="down" size={13} width={1.9} />
          </BarButton>
          <BarButton $divided aria-label="重新整理">
            <svg width="16" height="16" aria-hidden="true">
              <path d="M11.500 3a6 6 0 1 1-6.500-.3M2 2.500h4v4.200" fill="none" stroke="currentColor" strokeWidth="1.800" />
            </svg>
          </BarButton>
        </AddressBar>
        <SearchBox role="search">
          <SearchInput type="text" aria-label="搜尋控制台" />
          <SearchButton type="button" aria-label="搜尋">
            <svg width="14" height="14" aria-hidden="true">
              <circle cx="9" cy="5" r="3.800" fill="none" stroke="currentColor" strokeWidth="1.900" />
              <path d="M6.200 7.800.8 13.200" stroke="currentColor" strokeWidth="2" />
            </svg>
          </SearchButton>
        </SearchBox>
      </NavRow>

      <HeadingRow>
        <Heading>調整電腦設定</Heading>
        <ViewBy>
          <ViewLabel htmlFor="view-by">檢視方式:</ViewLabel>
          <ViewSelect id="view-by" defaultValue="large">
            <option value="large">大圖示</option>
          </ViewSelect>
          <Caret width="8" height="4" aria-hidden="true">
            <path d="M0 0h8L4 4z" fill="#0066cc" />
          </Caret>
          <Dashes />
        </ViewBy>
      </HeadingRow>
      <Rule />

      <Body>
        <Viewport>
          <Items>
            {peeks.map((icon) => (
              <Item key={icon} aria-hidden="true">
                <PeekArt viewBox="0 0 40 40">{art[icon]}</PeekArt>
              </Item>
            ))}
            {items.map(({ icon, name, latin, marked }) => (
              <Item key={icon}>
                <ItemLink href={`#${icon}`}>
                  <Art viewBox="0 0 40 40" aria-hidden="true">
                    {art[icon]}
                  </Art>
                  <ItemName>
                    {name}
                    {latin && <Latin> {latin}</Latin>}
                  </ItemName>
                  {marked && <Dashes />}
                </ItemLink>
              </Item>
            ))}
          </Items>
        </Viewport>
        <ScrollBar>
          <ScrollButton $row={1} aria-label="向上捲動">
            <Chevron dir="up" size={11} width={2.2} />
          </ScrollButton>
          <Thumb />
          <ScrollButton $row={4} aria-label="向下捲動">
            <Chevron dir="down" size={11} width={2.2} />
          </ScrollButton>
        </ScrollBar>
      </Body>
    </Window>
  );
}
